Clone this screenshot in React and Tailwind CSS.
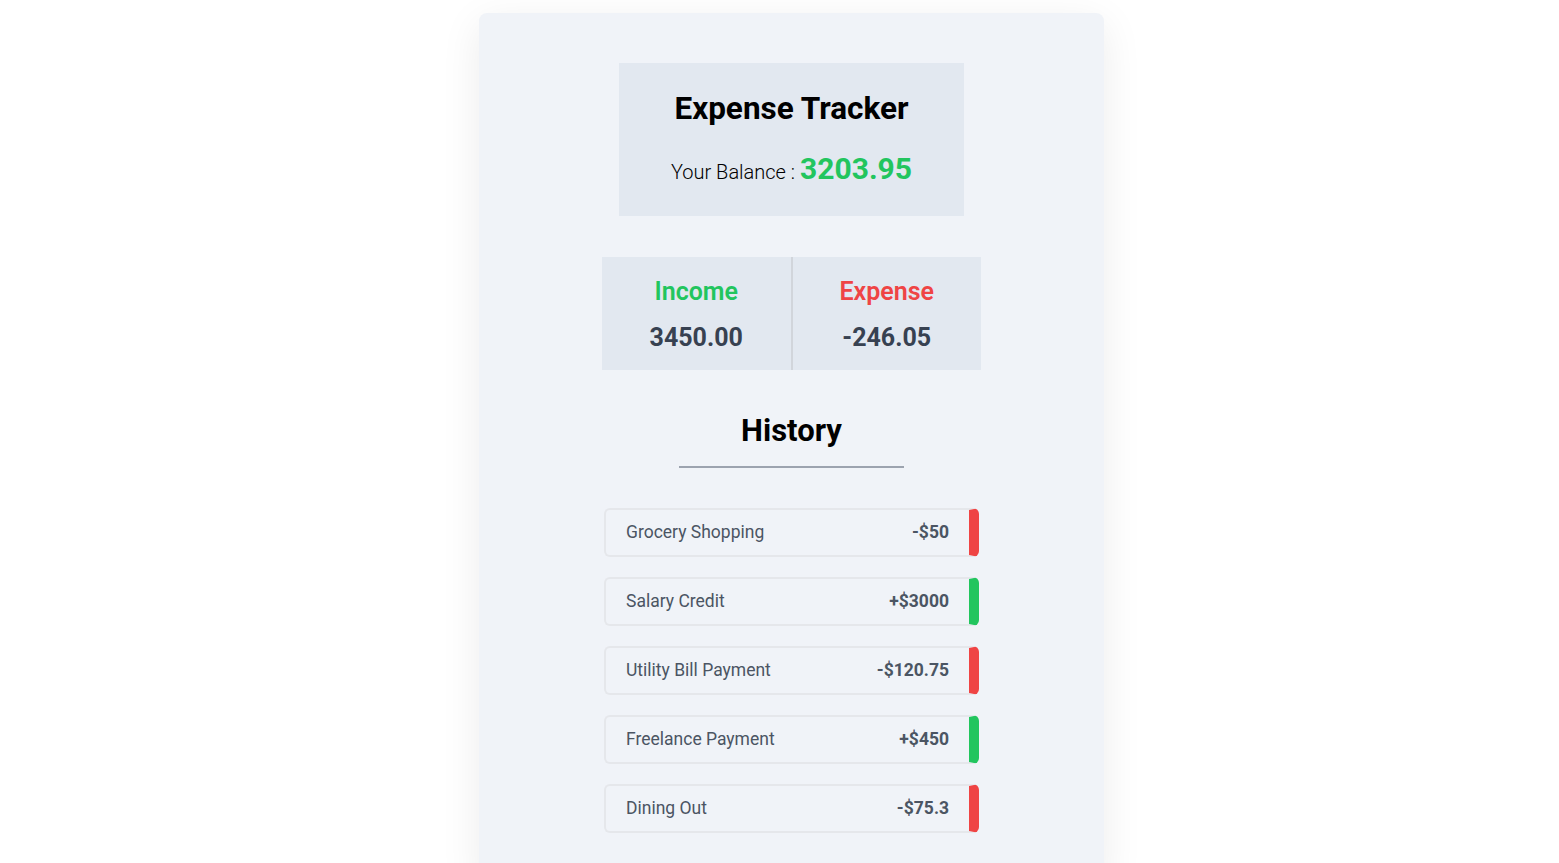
const transactions = [
  { id: 1, text: 'Grocery Shopping', amount: -50 },
  { id: 2, text: 'Salary Credit', amount: 3000 },
  { id: 3, text: 'Utility Bill Payment', amount: -120.75 },
  { id: 4, text: 'Freelance Payment', amount: 450 },
  { id: 5, text: 'Dining Out', amount: -75.3 },
]

function HistoryItem({ item }) {
  const positive = item.amount > 0
  return (
    <li
      className={`flex h-[49px] w-[375px] items-center justify-between rounded-md border-2 border-r-[10px] border-[#e5e7eb] pl-[20px] pr-[20px] text-[17.5px] text-[#4b5563] ${
        positive ? 'border-r-[#22c55e]' : 'border-r-[#ef4444]'
      }`}
    >
      <span>{item.text}</span>
      <span className="font-bold">
        {positive ? '+' : '-'}${Math.abs(item.amount)}
      </span>
    </li>
  )
}

export default function App() {
  return (
    <div className="flex min-h-screen justify-center overflow-hidden bg-white pl-[24px] pt-[13px] font-['Roboto',sans-serif]">
      <div className="flex h-[870px] w-[625px] flex-col items-center rounded-lg bg-[#f0f3f8] shadow-[0_10px_40px_rgba(0,0,0,0.08)]">
        <div className="mt-[50px] flex h-[153px] w-[345px] flex-col items-center justify-center bg-[#e2e8f0]">
          <h1 className="mt-[5px] text-[31.5px] font-bold leading-none text-black">Expense Tracker</h1>
          <p className="mt-[22px] flex items-baseline gap-[5px] text-[20px] font-light text-black">
            Your Balance :
            <span className="text-[30px] font-bold text-[#22c55e]">3203.95</span>
          </p>
        </div>

        <div className="mt-[41px] flex h-[113px] w-[379px] bg-[#e2e8f0]">
          <div className="flex flex-1 flex-col items-center justify-center gap-[21px] border-r-2 border-[#d1d5db] pt-[2px]">
            <h4 className="text-[25px] font-semibold leading-none text-[#22c55e]">Income</h4>
            <p className="text-[25px] font-bold leading-none text-[#374151]">3450.00</p>
          </div>
          <div className="flex flex-1 flex-col items-center justify-center gap-[21px] pt-[2px]">
            <h4 className="text-[25px] font-semibold leading-none text-[#ef4444]">Expense</h4>
            <p className="text-[25px] font-bold leading-none text-[#374151]">-246.05</p>
          </div>
        </div>

        <h3 className="mt-[45px] text-[31px] font-bold leading-none text-black">History</h3>
        <div className="mt-[20px] h-[2px] w-[225px] bg-[#9ca3af]" />

        <ul className="mt-[40px] flex flex-col gap-[20px]">
          {transactions.map((item) => (
            <HistoryItem key={item.id} item={item} />
          ))}
        </ul>
      </div>
    </div>
  )
}
